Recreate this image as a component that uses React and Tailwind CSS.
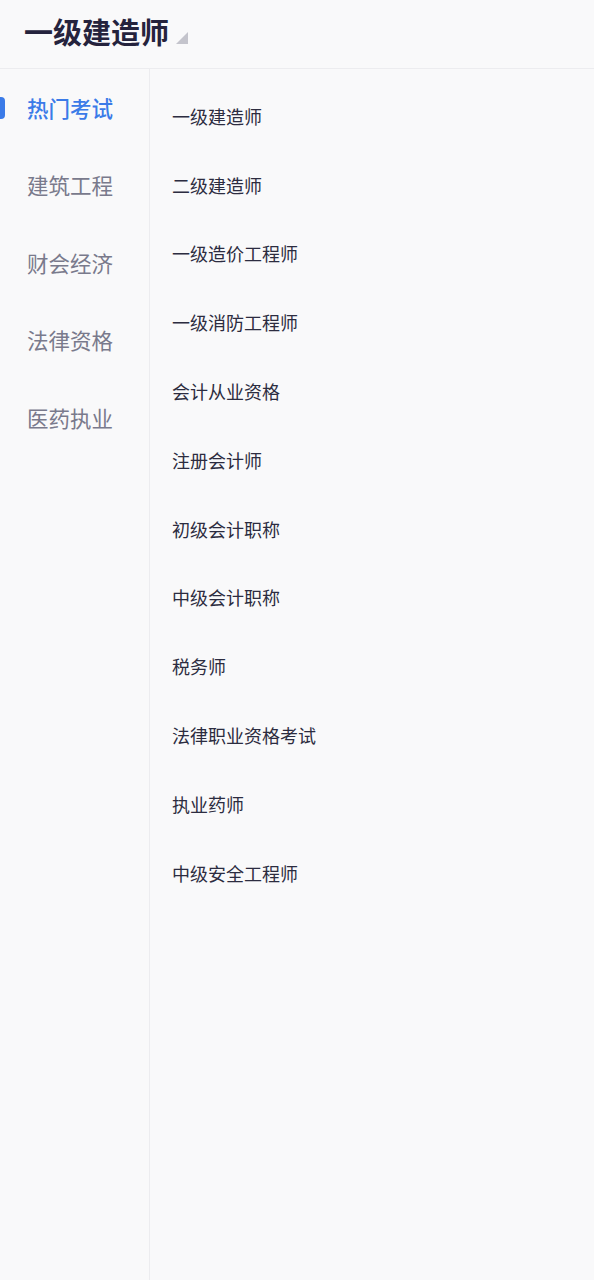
import React from 'react';

const navs = ['热门考试', '建筑工程', '财会经济', '法律资格', '医药执业'];

const exams = [
  '一级建造师',
  '二级建造师',
  '一级造价工程师',
  '一级消防工程师',
  '会计从业资格',
  '注册会计师',
  '初级会计职称',
  '中级会计职称',
  '税务师',
  '法律职业资格考试',
  '执业药师',
  '中级安全工程师',
];

const App = () => {
  return (
    <div
      className="w-[594px] h-[1280px] bg-[#f9f9fa] flex flex-col overflow-hidden"
      style={{ fontFamily: '"Noto Sans CJK SC", "Noto Sans", sans-serif' }}
    >
      {/* Header */}
      <div className="h-[69px] shrink-0 border-b border-[#ececef] flex items-center pl-[24px]">
        <h1 className="text-[29px] leading-none font-bold text-[#25233d] -mt-[6px]">一级建造师</h1>
        <svg width="12" height="12" viewBox="0 0 12 12" className="ml-[7px] mt-[8px]">
          <polygon points="12,0 12,12 0,12" fill="#c4c4cc" />
        </svg>
      </div>

      {/* Body */}
      <div className="flex flex-1">
        {/* Category nav */}
        <div className="w-[150px] shrink-0 border-r border-[#ececef]">
          {navs.map((n, i) => (
            <div key={n} className="relative h-[77.5px] flex items-center pl-[27px]">
              {i === 0 && (
                <span className="absolute left-0 top-[28px] w-[5px] h-[22px] rounded-r-sm bg-[#3b7be8]" />
              )}
              <span
                className={
                  i === 0
                    ? 'text-[21.5px] font-medium text-[#3b7be8]'
                    : 'text-[21.5px] text-[#797a8c]'
                }
              >
                {n}
              </span>
            </div>
          ))}
        </div>

        {/* Exam list */}
        <div className="flex-1 pt-[13px] pl-[22px]">
          {exams.map((e) => (
            <div key={e} className="h-[68.8px] flex items-center text-[18px] text-[#2c2c40]">
              {e}
            </div>
          ))}
        </div>
      </div>
    </div>
  );
};

export default App;
